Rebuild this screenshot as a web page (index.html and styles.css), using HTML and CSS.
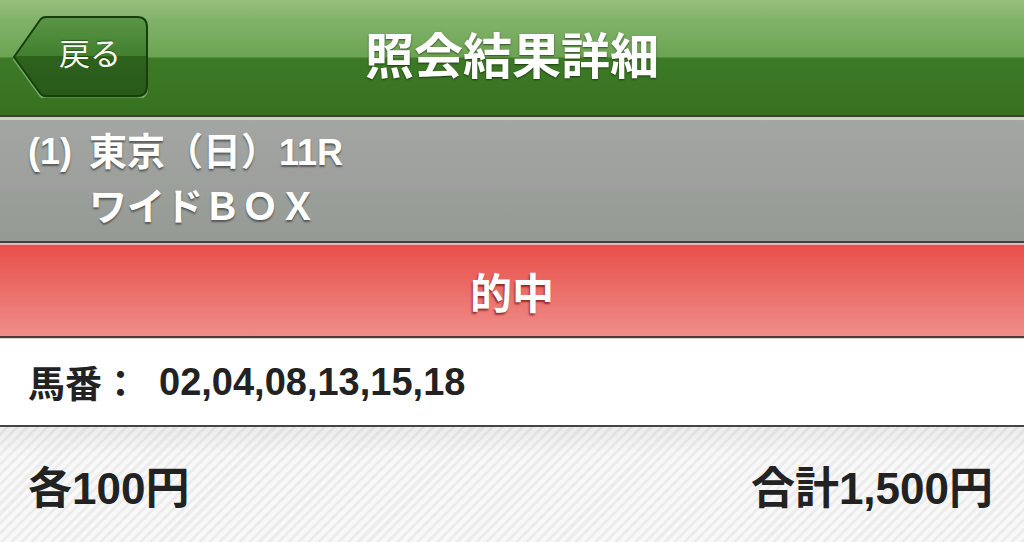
FILE: index.html
```html
<!DOCTYPE html>
<html lang="ja">
<head>
<meta charset="utf-8">
<title>照会結果詳細</title>
<link rel="stylesheet" href="styles.css">
</head>
<body>
<div class="page">
  <header class="nav">
    <a class="back" href="#">
      <svg class="back-shape" viewBox="0 0 136 82" width="136" height="82" aria-hidden="true">
        <defs>
          <linearGradient id="bg" x1="0" y1="0" x2="0" y2="1">
            <stop offset="0" stop-color="#5a9645"/>
            <stop offset="0.5" stop-color="#417e2d"/>
            <stop offset="0.5" stop-color="#2d621d"/>
            <stop offset="1" stop-color="#285919"/>
          </linearGradient>
        </defs>
        <path d="M2,42 L28,4 Q30,1 34,1 L125,1 Q135,1 135,11 L135,71 Q135,81 125,81 L34,81 Q30,81 28,78 Z" fill="none" stroke="rgba(190,230,170,0.45)" stroke-width="2" transform="translate(0,1.5)"/>
        <path d="M2,41 L28,4 Q30,1 34,1 L125,1 Q135,1 135,11 L135,70 Q135,80 125,80 L34,80 Q30,80 28,77 Z" fill="url(#bg)" stroke="#173f0c" stroke-width="2"/>
      </svg>
      <span class="back-label">戻る</span>
    </a>
    <h1 class="title">照会結果詳細</h1>
    <span class="nav-spacer"></span>
  </header>

  <section class="race">
    <span class="lat">(1)</span>
    <span class="race-name">東京（日）<span class="lat">11R</span></span>
    <span class="race-type">ワイドＢＯＸ</span>
  </section>

  <section class="result">的中</section>

  <section class="horses">
    <span class="horses-label">馬番：</span>
    <span class="horses-nums">02,04,08,13,15,18</span>
  </section>

  <section class="amount">
    <span class="each">各100円</span>
    <span class="total">合計1,500円</span>
  </section>
</div>
</body>
</html>
```

FILE: styles.css
```css
html, body {
  margin: 0;
  padding: 0;
}
body {
  width: 1024px;
  height: 542px;
  overflow: hidden;
  background: #fff;
  font-family: "Liberation Sans", "Noto Sans CJK JP", sans-serif;
}
.page {
  display: flex;
  flex-direction: column;
  height: 542px;
}

/* Header */
.nav {
  height: 115px;
  flex: none;
  display: grid;
  grid-template-columns: 1fr auto 1fr;
  align-items: center;
  padding: 0 12px;
  background: linear-gradient(to bottom, #95c07d 0, #82b26a 20px, #6ba451 57px, #3d7a26 58px, #36711f 115px);
  border-bottom: 2px solid #3a4336;
}
.back {
  position: relative;
  justify-self: start;
  width: 136px;
  height: 82px;
  margin-top: -2px;
  display: flex;
  align-items: center;
  justify-content: center;
  text-decoration: none;
}
.back-shape {
  position: absolute;
  left: 0;
  top: 0;
}
.back-label {
  position: relative;
  padding-left: 20px;
  padding-bottom: 10px;
  font-family: "Noto Sans CJK JP", sans-serif;
  font-size: 31px;
  font-weight: 400;
  color: #f4f8f0;
  text-shadow: 0 -1px 1px rgba(0, 0, 0, 0.35);
}
.title {
  margin: 0;
  padding-bottom: 10px;
  font-family: "Noto Sans CJK JP", sans-serif;
  font-size: 49px;
  font-weight: 700;
  color: #fff;
  letter-spacing: 0;
  text-shadow: 0 1px 2px rgba(0, 0, 0, 0.55);
}

/* Race info */
.race {
  flex: none;
  height: 126px;
  box-sizing: border-box;
  display: grid;
  grid-template-columns: auto 1fr;
  grid-auto-rows: 52px;
  column-gap: 17px;
  align-content: start;
  align-items: center;
  padding: 6px 0 0 28px;
  background: linear-gradient(to bottom, #a3a6a2, #969a95);
  border-top: 3px solid #cfd1ce;
  border-bottom: 2px solid #3f413e;
  color: #fff;
  font-size: 38px;
  font-weight: 700;
  text-shadow: 0 2px 2px rgba(0, 0, 0, 0.45);
  line-height: 1;
}
.race .lat {
  font-size: 36px;
}
.race-name {
  font-family: "Liberation Sans", "Noto Sans CJK JP", sans-serif;
}
.race-type {
  grid-column: 2;
  font-family: "Noto Sans CJK JP", sans-serif;
}

/* Result */
.result {
  flex: none;
  height: 91px;
  display: flex;
  align-items: center;
  justify-content: center;
  background: linear-gradient(to bottom, #e84f48, #ec716c 55%, #ef8d89);
  border-top: 2px solid #f6b4b0;
  border-bottom: 2px solid #4b3c3c;
  font-family: "Noto Sans CJK JP", sans-serif;
  font-size: 42px;
  font-weight: 700;
  color: #fff;
  text-shadow: -1px 2px 2px rgba(110, 10, 10, 0.7);
}

/* Horses */
.horses {
  flex: none;
  height: 86px;
  display: flex;
  align-items: center;
  padding-left: 28px;
  background: #fff;
  border-top: 1px solid #d9d9d9;
  border-bottom: 2px solid #444;
  color: #222;
  font-weight: 700;
}
.horses-label {
  font-family: "Noto Sans CJK JP", sans-serif;
  font-size: 37px;
}
.horses-nums {
  margin-left: 20px;
  font-size: 38px;
}

/* Amount */
.amount {
  flex: 1;
  display: flex;
  align-items: center;
  justify-content: space-between;
  padding: 0 31px 0 28px;
  background:
    linear-gradient(to bottom, rgba(0, 0, 0, 0.05), rgba(0, 0, 0, 0) 30px),
    repeating-linear-gradient(135deg, #f8f8f8 0 4px, #ececec 4px 7px);
  color: #222;
  font-size: 44px;
  font-weight: 700;
}
```
